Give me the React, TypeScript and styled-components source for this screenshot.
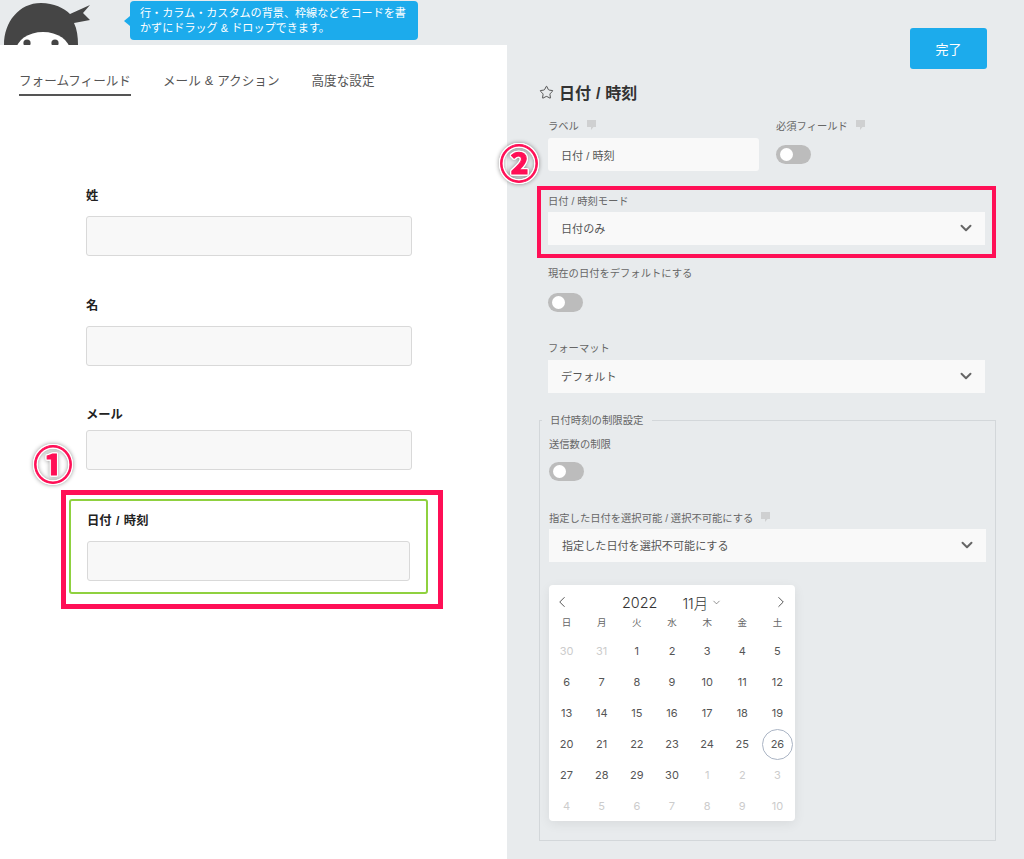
import React from "react";
import styled, { createGlobalStyle } from "styled-components";
import { ChevronDown, ChevronLeft, ChevronRight, Star } from "lucide-react";

const Global = createGlobalStyle`
  html, body { margin: 0; padding: 0; background: #e8ebed; }
  * { box-sizing: border-box; }
  body { font-family: "Liberation Sans", "Noto Sans CJK JP", sans-serif; }
`;

const Page = styled.div`
  position: relative;
  display: grid;
  grid-template-columns: 507px 517px;
  width: 1024px;
  height: 859px;
  overflow: hidden;
  background: #e8ebed;
`;

const LeftColumn = styled.div`
  display: flex;
  flex-direction: column;
`;

const TopBar = styled.header`
  display: flex;
  align-items: flex-start;
  height: 45px;
  padding-left: 2px;
  overflow: hidden;
`;

const Logo = styled.svg`
  display: block;
  width: 92px;
  height: 45px;
  flex: none;
`;

const Bubble = styled.div`
  position: relative;
  width: 288px;
  height: 39px;
  margin: 1px 0 0 36px;
  padding: 5px 10px;
  border-radius: 4px;
  background: #1cabec;
  color: #fff;
  font-size: 11.1px;
  line-height: 15px;
  white-space: nowrap;
  &::before {
    content: "";
    position: absolute;
    left: -6px;
    top: 15px;
    border-style: solid;
    border-width: 5px 6px 5px 0;
    border-color: transparent #1cabec transparent transparent;
  }
`;

const BuilderPanel = styled.main`
  flex: 1;
  background: #fff;
`;

const Tabs = styled.nav`
  display: flex;
  gap: 32px;
  height: 51px;
  padding: 27px 0 0 19px;
`;

const Tab = styled.div<{ $active?: boolean }>`
  height: 24px;
  font-size: 12.6px;
  line-height: 19px;
  word-spacing: 0.5px;
  color: #555;
  white-space: nowrap;
  border-bottom: ${(p) => (p.$active ? "2px solid #555" : "none")};
`;

const FormFields = styled.div`
  width: 326px;
  margin-left: 86px;
  padding-top: 91px;
`;

const Field = styled.div<{ $top: number; $gap: number }>`
  margin-top: ${(p) => p.$top}px;
  & > label { margin-bottom: ${(p) => p.$gap}px; }
`;

const FieldLabel = styled.label`
  display: block;
  height: 17px;
  font-size: 12.3px;
  font-weight: 700;
  line-height: 19px;
  word-spacing: 1px;
  color: #222;
`;

const TextBox = styled.div`
  height: 40px;
  background: #f8f8f8;
  border: 1px solid #d9d9d9;
  border-radius: 3px;
`;

const SelectedField = styled.div`
  width: 359px;
  height: 95px;
  margin: 29px 0 0 -17px;
  padding: 11px 16px 0;
  border: 2px solid #8fd13f;
  border-radius: 3px;
  & > label { margin-bottom: 12px; }
`;

const RightColumn = styled.aside`
  display: flex;
  flex-direction: column;
`;

const DoneButton = styled.button`
  align-self: flex-end;
  width: 77px;
  height: 41px;
  margin: 28px 37px 0 0;
  border: 0;
  border-radius: 3px;
  background: #1cabec;
  color: #fff;
  font: 13px "Liberation Sans", "Noto Sans CJK JP", sans-serif;
`;

const Title = styled.h2`
  display: flex;
  align-items: center;
  gap: 5px;
  height: 22px;
  margin: 12px 0 0 32px;
  font-size: 16px;
  font-weight: 700;
  word-spacing: 0.5px;
  color: #333;
`;

const Form = styled.div`
  padding-left: 41px;
`;

const LabelRow = styled.div`
  display: grid;
  grid-template-columns: 211px 1fr;
  column-gap: 17px;
  margin-top: 15px;
`;

const SmallLabel = styled.div<{ $top?: number; $gap?: number }>`
  display: flex;
  align-items: center;
  gap: 8px;
  height: 14px;
  margin-top: ${(p) => p.$top ?? 0}px;
  margin-bottom: ${(p) => p.$gap ?? 6}px;
  padding-top: 3px;
  font-size: 10.3px;
  line-height: 14px;
  color: #666;
  white-space: nowrap;
`;

const Hint = styled.svg`
  display: block;
  width: 9px;
  height: 10px;
  margin-top: -4px;
  fill: #cfd0d1;
`;

const LabelInput = styled.div`
  display: flex;
  align-items: center;
  height: 33px;
  padding-left: 13px;
  border-radius: 3px;
  background: #f9f9f9;
  font-size: 11.1px;
  color: #555;
`;

const Toggle = styled.div<{ $top?: number }>`
  display: flex;
  align-items: center;
  width: 35px;
  height: 19px;
  margin-top: ${(p) => p.$top ?? 0}px;
  padding-left: 4px;
  border-radius: 10px;
  background: #bcbcbc;
  &::before {
    content: "";
    width: 13px;
    height: 13px;
    border-radius: 50%;
    background: #fff;
  }
`;

const Select = styled.div`
  display: flex;
  align-items: center;
  justify-content: space-between;
  width: 437px;
  height: 33px;
  padding: 2px 10px 0 13px;
  background: #f9f9f9;
  font-size: 11.1px;
  line-height: 31px;
  color: #555;
  svg { display: block; margin-top: -4px; }
`;

const Limits = styled.fieldset`
  width: 456px;
  height: 428px;
  margin: 20px 0 0 -9px;
  padding: 9px 9px 0;
  border: 1px solid #d3d7da;
  border-radius: 0;
`;

const Legend = styled.legend`
  height: 14px;
  margin-left: -7px;
  padding: 1px 8px 0;
  font-size: 10.4px;
  line-height: 14px;
  color: #666;
`;

const Calendar = styled.div`
  width: 246px;
  height: 236px;
  margin-top: 23px;
  padding-top: 7px;
  border-radius: 4px;
  background: #fff;
  box-shadow: 0 3px 12px rgba(0, 0, 0, 0.07);
  font-family: Inter, "Noto Sans CJK JP", sans-serif;
`;

const CalendarHeader = styled.div`
  display: flex;
  align-items: center;
  height: 20px;
  padding: 0 5px 0 4px;
  color: #444;
  svg { display: block; }
`;

const HeaderCenter = styled.div`
  display: flex;
  align-items: center;
  flex: 1;
  padding-left: 51px;
  font-size: 14.4px;
  font-weight: 300;
  color: #333;
`;

const Month = styled.span`
  display: flex;
  align-items: center;
  gap: 3px;
  margin-left: 25px;
  svg { margin-top: 1px; }
`;

const Weekdays = styled.div`
  display: grid;
  grid-template-columns: repeat(7, 1fr);
  margin-top: 3px;
`;

const Weekday = styled.span`
  height: 16px;
  line-height: 16px;
  text-align: center;
  font-size: 9.5px;
  color: #666;
`;

const Days = styled.div`
  display: grid;
  grid-template-columns: repeat(7, 1fr);
  grid-auto-rows: 31.2px;
  margin-top: 4px;
`;

const Day = styled.span<{ $muted?: boolean; $today?: boolean }>`
  justify-self: center;
  display: flex;
  align-items: center;
  justify-content: center;
  width: 31px;
  height: 31px;
  border-radius: 50%;
  font-size: 11px;
  color: ${(p) => (p.$muted ? "#cccccc" : "#555")};
  border: ${(p) => (p.$today ? "1px solid #aab4c4" : "none")};
`;

const RedBox = styled.div<{ $x: number; $y: number; $w: number; $h: number; $line: number }>`
  position: absolute;
  left: ${(p) => p.$x}px;
  top: ${(p) => p.$y}px;
  width: ${(p) => p.$w}px;
  height: ${(p) => p.$h}px;
  border: ${(p) => p.$line}px solid #ff0f56;
  pointer-events: none;
`;

const Mark = styled.div<{ $x: number; $y: number }>`
  position: absolute;
  left: ${(p) => p.$x}px;
  top: ${(p) => p.$y}px;
  width: 36px;
  height: 36px;
  display: flex;
  align-items: center;
  justify-content: center;
  font-family: "Noto Sans CJK JP", sans-serif;
  font-size: 39px;
  font-weight: 700;
  line-height: 36px;
  color: #ff0f56;
  -webkit-text-stroke: 1px #ff0f56;
  filter: drop-shadow(1px 0 0 #fff) drop-shadow(-1px 0 0 #fff) drop-shadow(0 1px 0 #fff) drop-shadow(0 -1px 0 #fff) drop-shadow(0 0 2px rgba(0, 0, 0, 0.4));
`;

const HintIcon = () => (
  <Hint viewBox="0 0 9 10">
    <path d="M0 0h9v7H6.5L4 10V7H0z" />
  </Hint>
);

const weekdays = ["日", "月", "火", "水", "木", "金", "土"];
const before = [30, 31];
const after = [1, 2, 3, 4, 5, 6, 7, 8, 9, 10];
const current = Array.from({ length: 30 }, (_, i) => i + 1);

export default function App() {
  return (
    <Page>
      <Global />
      <LeftColumn>
        <TopBar>
          <Logo viewBox="0 0 92 45">
            <path fill="#454545" d="M2 45C2 22 17 3 39 3c13 0 23 5 29 11L88 5l-7 8 7 7-16 3c3 6 4 14 4 22z" />
            <ellipse cx="41" cy="51" rx="27" ry="19" fill="#fff" />
            <circle cx="25" cy="43" r="3.6" fill="#454545" />
            <circle cx="53" cy="43" r="3.6" fill="#454545" />
          </Logo>
          <Bubble>
            行・カラム・カスタムの背景、枠線などをコードを書
            <br />
            かずにドラッグ &amp; ドロップできます。
          </Bubble>
        </TopBar>
        <BuilderPanel>
          <Tabs>
            <Tab $active>フォームフィールド</Tab>
            <Tab>メール &amp; アクション</Tab>
            <Tab>高度な設定</Tab>
          </Tabs>
          <FormFields>
            <Field $top={0} $gap={12}>
              <FieldLabel>姓</FieldLabel>
              <TextBox />
            </Field>
            <Field $top={41} $gap={12}>
              <FieldLabel>名</FieldLabel>
              <TextBox />
            </Field>
            <Field $top={40} $gap={7}>
              <FieldLabel>メール</FieldLabel>
              <TextBox />
            </Field>
            <SelectedField>
              <FieldLabel>日付 / 時刻</FieldLabel>
              <TextBox />
            </SelectedField>
          </FormFields>
        </BuilderPanel>
      </LeftColumn>

      <RightColumn>
        <DoneButton>完了</DoneButton>
        <Title>
          <Star size={15} strokeWidth={1.3} color="#333" />
          日付 / 時刻
        </Title>
        <Form>
          <LabelRow>
            <div>
              <SmallLabel>
                ラベル
                <HintIcon />
              </SmallLabel>
              <LabelInput>日付 / 時刻</LabelInput>
            </div>
            <div>
              <SmallLabel $gap={13}>
                必須フィールド
                <HintIcon />
              </SmallLabel>
              <Toggle />
            </div>
          </LabelRow>
          <SmallLabel $top={22} $gap={5}>日付 / 時刻モード</SmallLabel>
          <Select>
            日付のみ
            <ChevronDown size={18} strokeWidth={2.6} color="#666" />
          </Select>
          <SmallLabel $top={20} $gap={0}>現在の日付をデフォルトにする</SmallLabel>
          <Toggle $top={14} />
          <SmallLabel $top={28} $gap={6}>フォーマット</SmallLabel>
          <Select>
            デフォルト
            <ChevronDown size={18} strokeWidth={2.6} color="#666" />
          </Select>
          <Limits>
            <Legend>日付時刻の制限設定</Legend>
            <SmallLabel $gap={0}>送信数の制限</SmallLabel>
            <Toggle $top={12} />
            <SmallLabel $top={29} $gap={5}>
              指定した日付を選択可能 / 選択不可能にする
              <HintIcon />
            </SmallLabel>
            <Select>
              指定した日付を選択不可能にする
              <ChevronDown size={18} strokeWidth={2.6} color="#666" />
            </Select>
            <Calendar>
              <CalendarHeader>
                <ChevronLeft size={18} strokeWidth={1.2} />
                <HeaderCenter>
                  2022
                  <Month>
                    11月
                    <ChevronDown size={11} strokeWidth={1.4} color="#555" />
                  </Month>
                </HeaderCenter>
                <ChevronRight size={18} strokeWidth={1.2} />
              </CalendarHeader>
              <Weekdays>
                {weekdays.map((d) => (
                  <Weekday key={d}>{d}</Weekday>
                ))}
              </Weekdays>
              <Days>
                {before.map((d) => (
                  <Day key={`b${d}`} $muted>{d}</Day>
                ))}
                {current.map((d) => (
                  <Day key={d} $today={d === 26}>{d}</Day>
                ))}
                {after.map((d) => (
                  <Day key={`a${d}`} $muted>{d}</Day>
                ))}
              </Days>
            </Calendar>
          </Limits>
        </Form>
      </RightColumn>

      <RedBox $x={61} $y={490} $w={382} $h={119} $line={5} />
      <RedBox $x={537} $y={186} $w={459} $h={72} $line={4} />
      <Mark $x={35} $y={444}>①</Mark>
      <Mark $x={501} $y={143}>②</Mark>
    </Page>
  );
}
